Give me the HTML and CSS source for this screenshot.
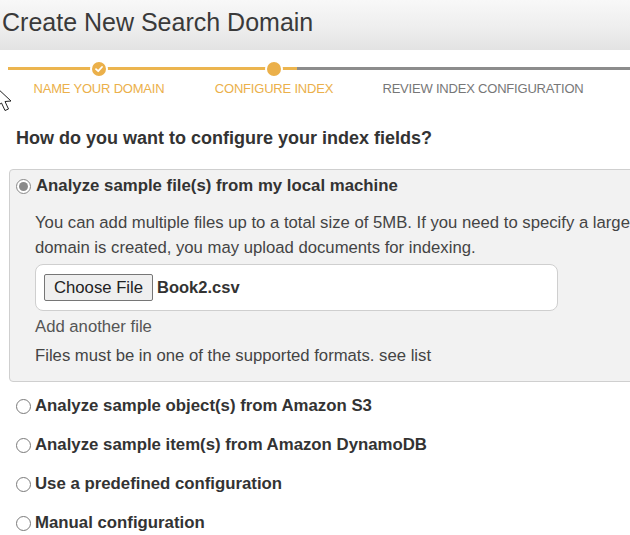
FILE: index.html
```html
<!DOCTYPE html>
<html>
<head>
<meta charset="utf-8">
<link rel="stylesheet" href="styles.css">
</head>
<body>
<div class="page">
  <header class="header">
    <h1 class="title">Create New Search Domain</h1>
  </header>

  <div class="stepper">
    <div class="track"><div class="track-fill"></div></div>
    <div class="steps">
      <div class="step done">
        <span class="dot">
          <svg width="10" height="10" viewBox="0 0 10 10"><path d="M2 5.2 L4.2 7.2 L8 3" fill="none" stroke="#fff" stroke-width="1.8" stroke-linecap="round" stroke-linejoin="round"/></svg>
        </span>
        <span class="step-label">NAME YOUR DOMAIN</span>
      </div>
      <div class="step current">
        <span class="dot"></span>
        <span class="step-label">CONFIGURE INDEX</span>
      </div>
      <div class="step todo">
        <span class="dot"></span>
        <span class="step-label">REVIEW INDEX CONFIGURATION</span>
      </div>
    </div>
    <svg class="cursor" width="14" height="26" viewBox="0 0 14 26"><path d="M-4 1 L11 15 L5 15.5 L8.5 23 L5 24.5 L1.5 17 L-4 21" fill="#fff" stroke="#222" stroke-width="1"/></svg>
  </div>

  <main class="content">
    <h2 class="question">How do you want to configure your index fields?</h2>

    <section class="panel">
      <label class="option">
        <span class="radio checked"></span>
        <span class="option-label">Analyze sample file(s) from my local machine</span>
      </label>
      <div class="panel-body">
        <p class="desc">You can add multiple files up to a total size of 5MB. If you need to specify a larger sample, use Amazon S3. After the<br>domain is created, you may upload documents for indexing.</p>
        <div class="filebox">
          <span class="file-btn">Choose File</span>
          <span class="file-name">Book2.csv</span>
        </div>
        <div class="add-file">Add another file</div>
        <div class="formats">Files must be in one of the supported formats. see list</div>
      </div>
    </section>

    <ul class="options">
      <li class="option"><span class="radio"></span><span class="option-label">Analyze sample object(s) from Amazon S3</span></li>
      <li class="option"><span class="radio"></span><span class="option-label">Analyze sample item(s) from Amazon DynamoDB</span></li>
      <li class="option"><span class="radio"></span><span class="option-label">Use a predefined configuration</span></li>
      <li class="option"><span class="radio"></span><span class="option-label">Manual configuration</span></li>
    </ul>
  </main>
</div>
</body>
</html>
```

FILE: styles.css
```css
* { box-sizing: border-box; }
html, body { margin: 0; padding: 0; }
body {
  font-family: "Liberation Sans", Arial, sans-serif;
  color: #333;
  background: #fff;
  width: 630px;
  height: 535px;
  overflow: hidden;
}
.page { width: 630px; overflow: hidden; }

.header {
  height: 50px;
  background: linear-gradient(to bottom, #f8f8f8 0%, #eeeeee 55%, #e3e3e3 100%);
  padding: 7px 0 0 2px;
}
.title {
  margin: 0;
  font-size: 25px;
  font-weight: normal;
  color: #3a3a3a;
  line-height: 30px;
}

.stepper {
  position: relative;
  height: 62px;
  padding-top: 10px;
}
.track {
  position: absolute;
  left: 8px;
  right: 0;
  top: 17px;
  height: 3px;
  background: #8c8c8c;
}
.track-fill {
  width: 289px;
  height: 3px;
  background: #ecb54f;
}
.steps {
  position: relative;
  display: grid;
  grid-template-columns: 182px 168px 250px;
  margin-left: 8px;
}
.step {
  display: flex;
  flex-direction: column;
  align-items: center;
}
.dot {
  width: 18px;
  height: 18px;
  border-radius: 50%;
  border: 2px solid #fff;
  display: flex;
  align-items: center;
  justify-content: center;
}
.step.done .dot, .step.current .dot { background: #ebb04a; }
.step.todo .dot { visibility: hidden; }
.step-label {
  margin-top: 3px;
  font-size: 13px;
  color: #ebb04a;
  letter-spacing: -0.2px;
}
.step.todo .step-label { color: #777; }
.cursor {
  position: absolute;
  left: 0;
  top: 36px;
}

.content { padding: 0 0 0 9px; }
.question {
  margin: 15px 0 20px 7px;
  font-size: 18px;
  font-weight: bold;
  color: #333;
  line-height: 22px;
}

.panel {
  width: 660px;
  height: 213px;
  background: #f2f2f2;
  border: 1px solid #cfcfcf;
  border-radius: 4px;
  padding: 4px 0 0 6px;
}
.option {
  display: flex;
  align-items: center;
  gap: 5px;
  height: 24px;
}
.radio {
  width: 15px;
  height: 15px;
  border-radius: 50%;
  border: 1px solid #7a7a7a;
  background: #fff;
  flex: none;
  position: relative;
}
.radio.checked { border-color: #888; background: #fff; }
.radio.checked::after {
  content: "";
  position: absolute;
  left: 2px; top: 2px;
  width: 9px; height: 9px;
  border-radius: 50%;
  background: #8a8a8a;
}
.option-label {
  font-size: 16.8px;
  font-weight: bold;
  color: #333;
}
.panel-body { padding: 12px 0 0 19px; }
.desc {
  margin: 0;
  font-size: 16.7px;
  line-height: 25px;
  color: #444;
  white-space: nowrap;
}
.filebox {
  margin-top: 4px;
  width: 523px;
  height: 47px;
  background: #fff;
  border: 1px solid #cfcfcf;
  border-radius: 8px;
  display: flex;
  align-items: center;
  padding-left: 8px;
  gap: 4px;
}
.file-btn {
  height: 27px;
  padding: 0 9px;
  display: flex;
  align-items: center;
  background: #efefef;
  border: 1px solid #767676;
  border-radius: 2px;
  font-size: 16.7px;
  color: #222;
}
.file-name { font-size: 16.5px; font-weight: bold; color: #333; }
.add-file {
  margin-top: 5px;
  font-size: 16.7px;
  line-height: 22px;
  color: #555;
}
.formats {
  margin-top: 7px;
  font-size: 16.7px;
  line-height: 22px;
  color: #444;
}

.options {
  list-style: none;
  margin: 12px 0 0 0;
  padding: 0 0 0 7px;
  display: flex;
  flex-direction: column;
  gap: 15px;
}
.options .option { gap: 4px; }
```
